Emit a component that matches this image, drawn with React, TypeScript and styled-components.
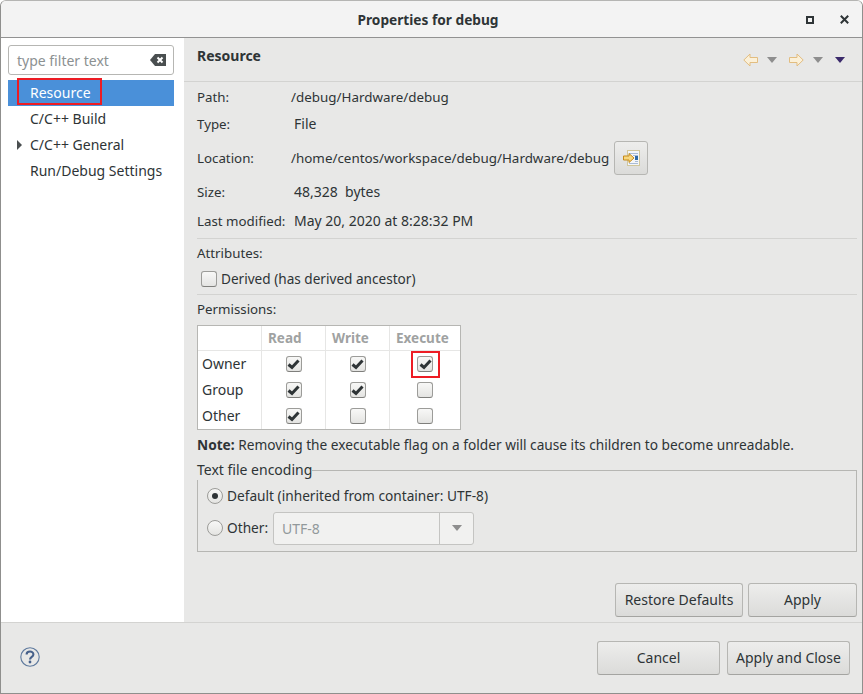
import React from 'react'
import styled, { createGlobalStyle } from 'styled-components'

const GlobalStyle = createGlobalStyle`
html, body {
  margin: 0;
  padding: 0;
  background: #fff;
}
body {
  font-family: "Noto Sans", "Open Sans", sans-serif;
  font-size: 14px;
  color: #2e3436;
}
`

const BackArrow = () => (
  <svg width="15" height="14" viewBox="0 0 15 14">
    <path d="M0.8 7 L7 1 V4.5 H14.5 V9.5 H7 V13 Z" fill="#fbf0d8" stroke="#e2bd80" strokeWidth="1" />
  </svg>
)

const ForwardArrow = () => (
  <svg width="15" height="14" viewBox="0 0 15 14">
    <path d="M14.2 7 L8 1 V4.5 H0.5 V9.5 H8 V13 Z" fill="#fbf0d8" stroke="#e2bd80" strokeWidth="1" />
  </svg>
)

const Caret = ({ color }: { color: string }) => (
  <svg width="10" height="6" viewBox="0 0 10 6">
    <path d="M0 0 H10 L5 6 Z" fill={color} />
  </svg>
)

const FileIcon = () => (
  <svg width="17" height="16" viewBox="0 0 17 16">
    <rect x="4.5" y="0.5" width="12" height="15" fill="#f4f6fa" stroke="#d0c69c" />
    <path d="M6 3.5 H15 M10 5.5 H15 M12 11.5 H15 M6 13.5 H15" stroke="#a9bcd6" />
    <rect x="12" y="6" width="3" height="4" fill="#2f6aa6" />
    <path d="M0.5 6 H6 V3.5 L11 8 L6 12.5 V10 H0.5 Z" fill="#f7d77e" stroke="#c58a18" />
  </svg>
)

const HelpIcon = () => (
  <svg width="20" height="20" viewBox="0 0 20 20">
    <circle cx="10" cy="10" r="9.2" fill="none" stroke="#5f7a9e" strokeWidth="1.1" />
    <path d="M6.6 7.6 C6.6 3.6 13.4 3.6 13.4 7.4 C13.4 9.8 10 9.8 10 12.4" fill="none" stroke="#46608a" strokeWidth="2.1" />
    <circle cx="10" cy="15" r="1.4" fill="#46608a" />
  </svg>
)

const ClearIcon = () => (
  <svg width="16" height="12" viewBox="0 0 16 12">
    <path d="M0 6 L5 0 H16 V12 H5 Z" fill="#4a4f50" />
    <path d="M7.5 3.5 L12.5 8.5 M12.5 3.5 L7.5 8.5" stroke="#fff" strokeWidth="2" />
  </svg>
)

const Check = () => (
  <svg width="13" height="11" viewBox="0 0 13 11">
    <path d="M1.5 5.5 L5 8.5 L11.5 1.5" fill="none" stroke="#2e3436" strokeWidth="3" />
  </svg>
)

const CheckBox = ({ checked }: { checked?: boolean }) => (
  <CheckFrame>{checked && <Check />}</CheckFrame>
)

const permissions = [
  { name: 'Owner', read: true, write: true, execute: true, marked: true },
  { name: 'Group', read: true, write: true, execute: false },
  { name: 'Other', read: true, write: false, execute: false },
]

const navItems = [
  { label: 'Resource', selected: true },
  { label: 'C/C++ Build' },
  { label: 'C/C++ General', expandable: true },
  { label: 'Run/Debug Settings' },
]

export default function App() {
  return (
    <>
      <GlobalStyle />
      <Dialog>
        <TitleBar>
          <Title>Properties for debug</Title>
          <WindowButtons>
            <MaxButton />
            <svg width="9" height="9" viewBox="0 0 9 9">
              <path d="M0.8 0.8 L8.2 8.2 M8.2 0.8 L0.8 8.2" stroke="#2e3436" strokeWidth="2" />
            </svg>
          </WindowButtons>
        </TitleBar>
        <Body>
          <Sidebar>
            <FilterBox>
              <FilterText>type filter text</FilterText>
              <ClearIcon />
            </FilterBox>
            <NavList>
              {navItems.map((item) => (
                <NavItem key={item.label} $selected={item.selected}>
                  {item.expandable && <Expander />}
                  {item.label}
                  {item.selected && <NavMarker />}
                </NavItem>
              ))}
            </NavList>
          </Sidebar>
          <Main>
            <PageHeader>
              <PageTitle>Resource</PageTitle>
              <HistoryNav>
                <NavGroup>
                  <BackArrow />
                  <Caret color="#8e8e8e" />
                </NavGroup>
                <NavGroup>
                  <ForwardArrow />
                  <Caret color="#8e8e8e" />
                </NavGroup>
                <Caret color="#3b2a6b" />
              </HistoryNav>
            </PageHeader>
            <Content>
              <InfoRow $height={27}>
                <InfoLabel>Path:</InfoLabel>
                <PathValue>/debug/Hardware/debug</PathValue>
              </InfoRow>
              <InfoRow $height={27}>
                <InfoLabel>Type:</InfoLabel>
                <IndentValue>File</IndentValue>
              </InfoRow>
              <InfoRow $height={41}>
                <InfoLabel>Location:</InfoLabel>
                <PathValue>/home/centos/workspace/debug/Hardware/debug</PathValue>
                <IconButton>
                  <FileIcon />
                </IconButton>
              </InfoRow>
              <InfoRow $height={27}>
                <InfoLabel>Size:</InfoLabel>
                <IndentValue>48,328&nbsp; bytes</IndentValue>
              </InfoRow>
              <LastRow $height={31}>
                <InfoLabel>Last modified:</InfoLabel>
                <IndentValue>May 20, 2020 at 8:28:32 PM</IndentValue>
              </LastRow>
              <Divider />
              <SectionLabel>Attributes:</SectionLabel>
              <DerivedRow>
                <CheckBox />
                <RaisedText>Derived (has derived ancestor)</RaisedText>
              </DerivedRow>
              <Divider />
              <SectionLabel>Permissions:</SectionLabel>
              <PermTable>
                <PermHead />
                <PermHead>Read</PermHead>
                <PermHead>Write</PermHead>
                <PermHead>Execute</PermHead>
                {permissions.map((row) => (
                  <React.Fragment key={row.name}>
                    <PermName>{row.name}</PermName>
                    <PermCell>
                      <CheckBox checked={row.read} />
                    </PermCell>
                    <PermCell>
                      <CheckBox checked={row.write} />
                    </PermCell>
                    <PermCell>
                      <CheckBox checked={row.execute} />
                      {row.marked && <CellMarker />}
                    </PermCell>
                  </React.Fragment>
                ))}
              </PermTable>
              <Note>
                <b>Note:</b> Removing the executable flag on a folder will cause its children to become unreadable.
              </Note>
              <EncodingGroup>
                <EncodingLegend>Text file encoding</EncodingLegend>
                <RadioRow $height={32}>
                  <Radio $on />
                  <RaisedText>Default (inherited from container: UTF-8)</RaisedText>
                </RadioRow>
                <RadioRow $height={32}>
                  <Radio />
                  <OtherLabel>Other:</OtherLabel>
                  <Combo>
                    <ComboText>UTF-8</ComboText>
                    <ComboArrow>
                      <Caret color="#8e8e8e" />
                    </ComboArrow>
                  </Combo>
                </RadioRow>
              </EncodingGroup>
              <PageActions>
                <Button $width={128}>Restore Defaults</Button>
                <Button $width={109}>Apply</Button>
              </PageActions>
            </Content>
          </Main>
        </Body>
        <Footer>
          <HelpSlot>
            <HelpIcon />
          </HelpSlot>
          <FooterActions>
            <Button $width={123}>Cancel</Button>
            <Button $width={123}>Apply and Close</Button>
          </FooterActions>
        </Footer>
      </Dialog>
    </>
  )
}

const Dialog = styled.div`
  box-sizing: border-box;
  width: 863px;
  height: 694px;
  display: flex;
  flex-direction: column;
  background: #e8e8e7;
  border: 1px solid #8f8f8d;
  border-top-color: #b5b5b3;
  border-radius: 6px 6px 0 0;
  overflow: hidden;
`

const TitleBar = styled.div`
  flex: none;
  box-sizing: border-box;
  height: 37px;
  padding-right: 7px;
  position: relative;
  display: flex;
  align-items: center;
  justify-content: center;
  background: #f3f3f3;
  border-bottom: 1px solid #929292;
`

const Title = styled.div`
  font-weight: 700;
  font-size: 13.7px;
  color: #2e3436;
`

const WindowButtons = styled.div`
  position: absolute;
  right: 13px;
  top: 14px;
  display: flex;
  align-items: center;
  gap: 26px;
`

const MaxButton = styled.div`
  box-sizing: border-box;
  width: 8px;
  height: 8px;
  border: 2px solid #2e3436;
`

const Body = styled.div`
  flex: 1;
  min-height: 0;
  display: flex;
`

const Sidebar = styled.div`
  flex: none;
  box-sizing: border-box;
  width: 183px;
  padding: 7px 10px 0 7px;
  background: #fff;
`

const FilterBox = styled.div`
  box-sizing: border-box;
  height: 30px;
  padding: 0 7px 0 8px;
  display: flex;
  align-items: center;
  justify-content: space-between;
  background: #fff;
  border: 1px solid #b6b6b3;
  border-radius: 3px;
`

const FilterText = styled.span`
  color: #8c9192;
`

const NavList = styled.div`
  margin-top: 5px;
`

const NavItem = styled.div<{ $selected?: boolean }>`
  box-sizing: border-box;
  position: relative;
  height: 26px;
  padding: 0 0 2px 22px;
  display: flex;
  align-items: center;
  background: ${(p) => (p.$selected ? '#4a90d9' : 'transparent')};
  color: ${(p) => (p.$selected ? '#fff' : '#2e3436')};
`

const Expander = styled.span`
  position: absolute;
  left: 9px;
  top: 8px;
  border-style: solid;
  border-width: 5px 0 5px 5px;
  border-color: transparent transparent transparent #4a4f50;
`

const NavMarker = styled.span`
  position: absolute;
  left: 9px;
  top: -2px;
  width: 85px;
  height: 27px;
  box-sizing: border-box;
  border: 2px solid #ed1c24;
`

const Main = styled.div`
  flex: 1;
  min-width: 0;
  display: flex;
  flex-direction: column;
`

const PageHeader = styled.div`
  flex: none;
  box-sizing: border-box;
  height: 44px;
  padding: 0 17px 0 13px;
  display: flex;
  align-items: center;
  justify-content: space-between;
  border-bottom: 1px solid #d3d3d1;
`

const PageTitle = styled.div`
  font-weight: 700;
  font-size: 14px;
  margin-top: -9px;
`

const HistoryNav = styled.div`
  display: flex;
  align-items: center;
  gap: 12px;
`

const NavGroup = styled.div`
  display: flex;
  align-items: center;
  gap: 9px;
`

const Content = styled.div`
  flex: 1;
  min-height: 0;
  padding: 1px 5px 0 13px;
  display: flex;
  flex-direction: column;
`

const InfoRow = styled.div<{ $height: number }>`
  flex: none;
  height: ${(p) => p.$height}px;
  display: flex;
  align-items: center;
`

const LastRow = styled(InfoRow)`
  margin-bottom: 2px;
`

const InfoLabel = styled.span`
  width: 94px;
  flex: none;
  font-size: 13.3px;
`

const PathValue = styled.span`
  font-size: 13.4px;
`

const IndentValue = styled.span`
  margin-left: 3px;
`

const IconButton = styled.div`
  box-sizing: border-box;
  width: 34px;
  height: 34px;
  margin-left: 5px;
  display: flex;
  align-items: center;
  justify-content: center;
  border: 1px solid #b6b6b3;
  border-radius: 3px;
  background: linear-gradient(#ededec, #dbdbd9);
`

const Divider = styled.div`
  flex: none;
  height: 1px;
  background: #d3d3d1;
`

const SectionLabel = styled.div`
  flex: none;
  box-sizing: border-box;
  height: 30px;
  padding-bottom: 2px;
  display: flex;
  align-items: center;
  font-size: 13.3px;
`

const DerivedRow = styled.div`
  flex: none;
  box-sizing: border-box;
  height: 25px;
  padding: 0 0 5px 4px;
  display: flex;
  align-items: center;
  gap: 4px;
  font-size: 13.6px;
`

const RaisedText = styled.span`
  margin-top: -2px;
`

const CheckFrame = styled.span`
  box-sizing: border-box;
  width: 16px;
  height: 16px;
  flex: none;
  display: flex;
  align-items: center;
  justify-content: center;
  border: 1px solid #9c9c99;
  border-bottom-color: #7f7f7c;
  border-radius: 3px;
  background: linear-gradient(#f8f8f7, #e4e4e2);
`

const PermTable = styled.div`
  flex: none;
  box-sizing: border-box;
  width: 264px;
  display: grid;
  grid-template-columns: 64px 64px 64px 70px;
  grid-template-rows: 25px 26px 26px 26px;
  background: #fff;
  border: 1px solid #b6b6b3;
`

const PermHead = styled.div`
  padding-left: 6px;
  display: flex;
  align-items: center;
  font-weight: 700;
  font-size: 13.5px;
  color: #a0a2a2;
  border-right: 1px solid #e6e6e5;
  border-bottom: 1px solid #e6e6e5;
  &:nth-child(4) {
    border-right: 0;
  }
`

const PermName = styled.div`
  padding: 0 0 2px 4px;
  display: flex;
  align-items: center;
  border-right: 1px solid #e6e6e5;
`

const PermCell = styled.div`
  position: relative;
  display: flex;
  align-items: center;
  justify-content: center;
  border-right: 1px solid #e6e6e5;
  &:nth-child(4n) {
    border-right: 0;
  }
`

const CellMarker = styled.span`
  position: absolute;
  left: 21px;
  top: 0;
  width: 29px;
  height: 27px;
  box-sizing: border-box;
  border: 2px solid #ed1c24;
`

const Note = styled.div`
  flex: none;
  box-sizing: border-box;
  height: 30px;
  padding-bottom: 2px;
  display: flex;
  align-items: center;
  white-space: pre-wrap;
  font-size: 13.7px;
  & b {
    font-weight: 700;
  }
`

const EncodingGroup = styled.fieldset`
  flex: none;
  box-sizing: border-box;
  height: 92px;
  margin: 0;
  padding: 0 0 0 9px;
  border: 1px solid #b6b6b3;
  min-inline-size: 0;
`

const EncodingLegend = styled.legend`
  padding: 0;
  margin-left: -10px;
  line-height: 20px;
`

const RadioRow = styled.div<{ $height: number }>`
  height: ${(p) => p.$height}px;
  display: flex;
  align-items: center;
  gap: 4px;
  font-size: 13.7px;
`

const OtherLabel = styled(RaisedText)`
  width: 46px;
  flex: none;
  margin-right: -4px;
`

const Radio = styled.span<{ $on?: boolean }>`
  box-sizing: border-box;
  width: 16px;
  height: 16px;
  flex: none;
  display: flex;
  align-items: center;
  justify-content: center;
  border: 1px solid #9c9c99;
  border-radius: 50%;
  background: linear-gradient(#f8f8f7, #e4e4e2);
  &::after {
    content: '';
    display: ${(p) => (p.$on ? 'block' : 'none')};
    width: 6px;
    height: 6px;
    border-radius: 50%;
    background: #2e3436;
  }
`

const Combo = styled.div`
  box-sizing: border-box;
  width: 201px;
  height: 33px;
  flex: none;
  display: flex;
  align-items: center;
  background: #f1f1f0;
  border: 1px solid #c4c4c2;
  border-radius: 3px;
  color: #92999b;
  font-size: 14px;
`

const ComboText = styled.span`
  flex: 1;
  padding-left: 8px;
`

const ComboArrow = styled.span`
  width: 33px;
  height: 100%;
  display: flex;
  align-items: center;
  justify-content: center;
  border-left: 1px solid #c4c4c2;
`

const PageActions = styled.div`
  flex: none;
  margin-top: 31px;
  display: flex;
  justify-content: flex-end;
  gap: 5px;
`

const Button = styled.div<{ $width: number }>`
  box-sizing: border-box;
  width: ${(p) => p.$width}px;
  height: 34px;
  padding-bottom: 1px;
  display: flex;
  align-items: center;
  justify-content: center;
  border: 1px solid #b6b6b3;
  border-bottom-color: #a4a4a1;
  border-radius: 3px;
  background: linear-gradient(#ededec, #dbdbd9);
  color: #2e3436;
`

const Footer = styled.div`
  flex: none;
  box-sizing: border-box;
  height: 71px;
  padding: 0 12px 0 19px;
  display: flex;
  align-items: center;
  justify-content: space-between;
  border-top: 1px solid #d3d3d1;
`

const HelpSlot = styled.div`
  display: flex;
  margin-top: -3px;
`

const FooterActions = styled.div`
  display: flex;
  gap: 7px;
`
